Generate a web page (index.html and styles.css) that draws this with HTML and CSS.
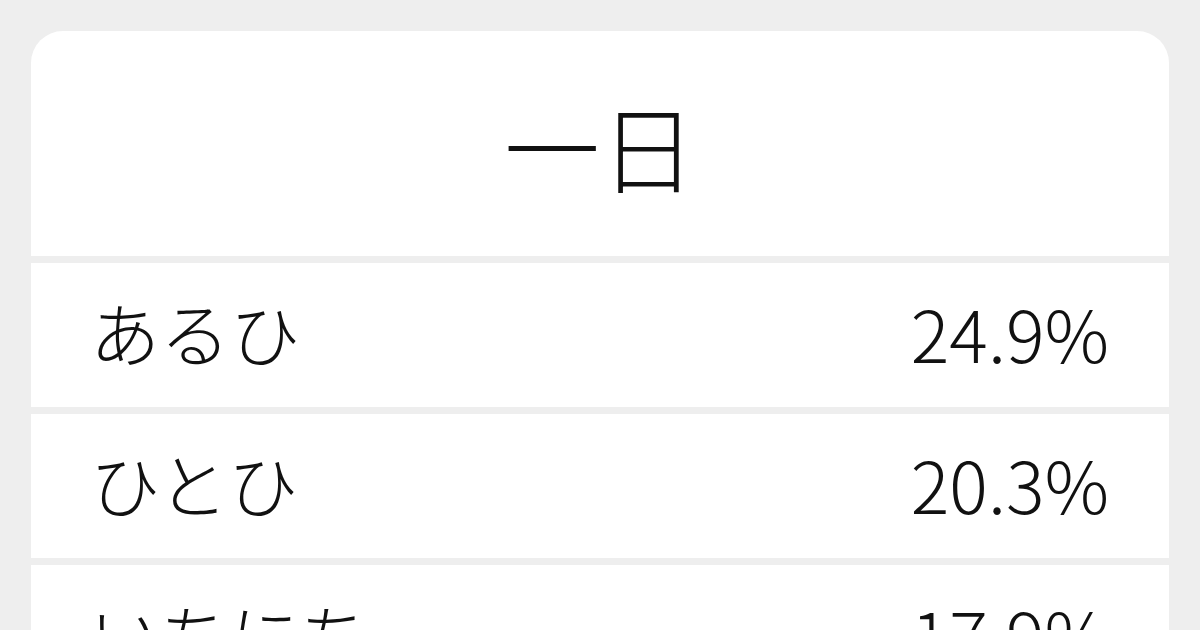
FILE: index.html
```html
<!DOCTYPE html>
<html lang="ja">
<head>
<meta charset="utf-8">
<link rel="stylesheet" href="styles.css">
</head>
<body>
<div class="card">
  <div class="title">一日</div>
  <div class="row"><span class="word">あるひ</span><span class="pct">24.9%</span></div>
  <div class="row"><span class="word">ひとひ</span><span class="pct">20.3%</span></div>
  <div class="row"><span class="word">いちにち</span><span class="pct">17.9%</span></div>
</div>
</body>
</html>
```
FILE: styles.css
```css
html, body {
  margin: 0;
  padding: 0;
}
body {
  width: 1200px;
  height: 630px;
  overflow: hidden;
  background: #eeeeee;
  font-family: "Noto Sans CJK JP", "Noto Sans", sans-serif;
  font-weight: 300;
  color: #111111;
}
.card {
  margin: 31px 31px 0 31px;
  background: #eeeeee;
  border-radius: 32px 32px 0 0;
  overflow: hidden;
  display: flex;
  flex-direction: column;
  gap: 7px;
}
.title {
  background: #ffffff;
  height: 225px;
  display: flex;
  align-items: center;
  justify-content: center;
  font-size: 96px;
  line-height: 1;
  padding-top: 2px;
  box-sizing: border-box;
}
.row {
  background: #ffffff;
  height: 144px;
  display: flex;
  align-items: center;
  justify-content: space-between;
  padding: 0 60px 6px 59px;
  box-sizing: border-box;
  font-size: 70px;
  line-height: 1;
}
.pct {
  font-size: 72px;
}
```
